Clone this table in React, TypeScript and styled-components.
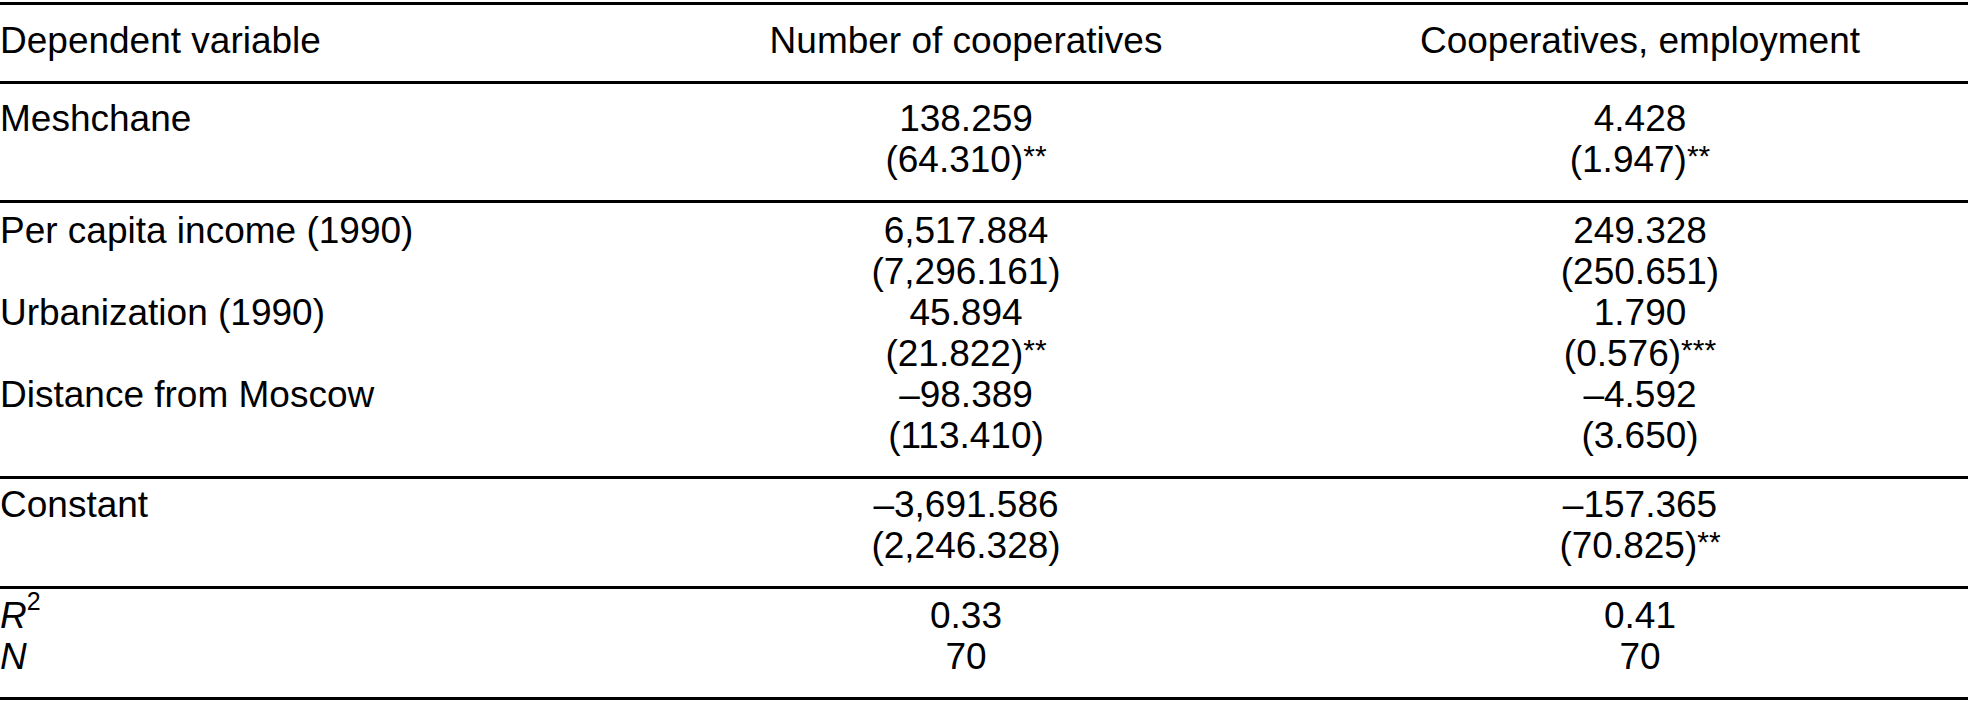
import React from "react";
import styled, { createGlobalStyle } from "styled-components";

const GlobalStyle = createGlobalStyle`
  html, body { margin: 0; padding: 0; background: #ffffff; }
  body { font-family: "Liberation Sans", Arial, Helvetica, sans-serif; color: #000; }
`;

const Table = styled.div`
  width: 1968px;
  padding-top: 2px;
  font-family: "Liberation Sans", Arial, Helvetica, sans-serif;
  font-size: 37px;
  line-height: 41px;
  color: #000;
`;

const Section = styled.div<{ $padTop: number }>`
  border-top: 3px solid #000;
  padding: ${(p) => p.$padTop}px 0 20px;
  &:last-child {
    border-bottom: 3px solid #000;
  }
`;

const Row = styled.div`
  display: grid;
  grid-template-columns: 716px 500px 1fr 656px;
  grid-template-areas: "label first . second";
`;

const Label = styled.div`
  grid-area: label;
  white-space: nowrap;
`;

const Value = styled.div<{ $area: "first" | "second" }>`
  grid-area: ${(p) => p.$area};
  text-align: center;
  white-space: nowrap;
`;

const Line = styled.div`
  height: 41px;
`;

const Stars = styled.sup`
  font-size: 30px;
  line-height: 0;
  vertical-align: 6px;
`;

const Sq = styled.sup`
  font-size: 25px;
  line-height: 0;
  vertical-align: 18px;
  font-style: normal;
`;

const Ital = styled.span`
  font-style: italic;
`;

type Est = { coef: string; se: string; stars?: string };

const Cell = ({ area, est }: { area: "first" | "second"; est: Est }) => (
  <Value $area={area}>
    <Line>{est.coef}</Line>
    <Line>
      {est.se}
      {est.stars ? <Stars>{est.stars}</Stars> : null}
    </Line>
  </Value>
);

type VarRow = { label: string; a: Est; b: Est };

const main: VarRow[] = [
  { label: "Meshchane", a: { coef: "138.259", se: "(64.310)", stars: "**" }, b: { coef: "4.428", se: "(1.947)", stars: "**" } },
];

const controls: VarRow[] = [
  { label: "Per capita income (1990)", a: { coef: "6,517.884", se: "(7,296.161)" }, b: { coef: "249.328", se: "(250.651)" } },
  { label: "Urbanization (1990)", a: { coef: "45.894", se: "(21.822)", stars: "**" }, b: { coef: "1.790", se: "(0.576)", stars: "***" } },
  { label: "Distance from Moscow", a: { coef: "\u201398.389", se: "(113.410)" }, b: { coef: "\u20134.592", se: "(3.650)" } },
];

const constant: VarRow[] = [
  { label: "Constant", a: { coef: "\u20133,691.586", se: "(2,246.328)" }, b: { coef: "\u2013157.365", se: "(70.825)", stars: "**" } },
];

const renderRows = (rows: VarRow[]) =>
  rows.map((r) => (
    <Row key={r.label}>
      <Label>{r.label}</Label>
      <Cell area="first" est={r.a} />
      <Cell area="second" est={r.b} />
    </Row>
  ));

export default function App() {
  return (
    <>
      <GlobalStyle />
      <Table>
        <Section $padTop={15}>
          <Row>
            <Label>Dependent variable</Label>
            <Value $area="first">Number of cooperatives</Value>
            <Value $area="second">Cooperatives, employment</Value>
          </Row>
        </Section>
        <Section $padTop={14}>{renderRows(main)}</Section>
        <Section $padTop={7}>{renderRows(controls)}</Section>
        <Section $padTop={5}>{renderRows(constant)}</Section>
        <Section $padTop={6}>
          <Row>
            <Label>
              <Ital>R</Ital>
              <Sq>2</Sq>
            </Label>
            <Value $area="first">0.33</Value>
            <Value $area="second">0.41</Value>
          </Row>
          <Row>
            <Label>
              <Ital>N</Ital>
            </Label>
            <Value $area="first">70</Value>
            <Value $area="second">70</Value>
          </Row>
        </Section>
      </Table>
    </>
  );
}
